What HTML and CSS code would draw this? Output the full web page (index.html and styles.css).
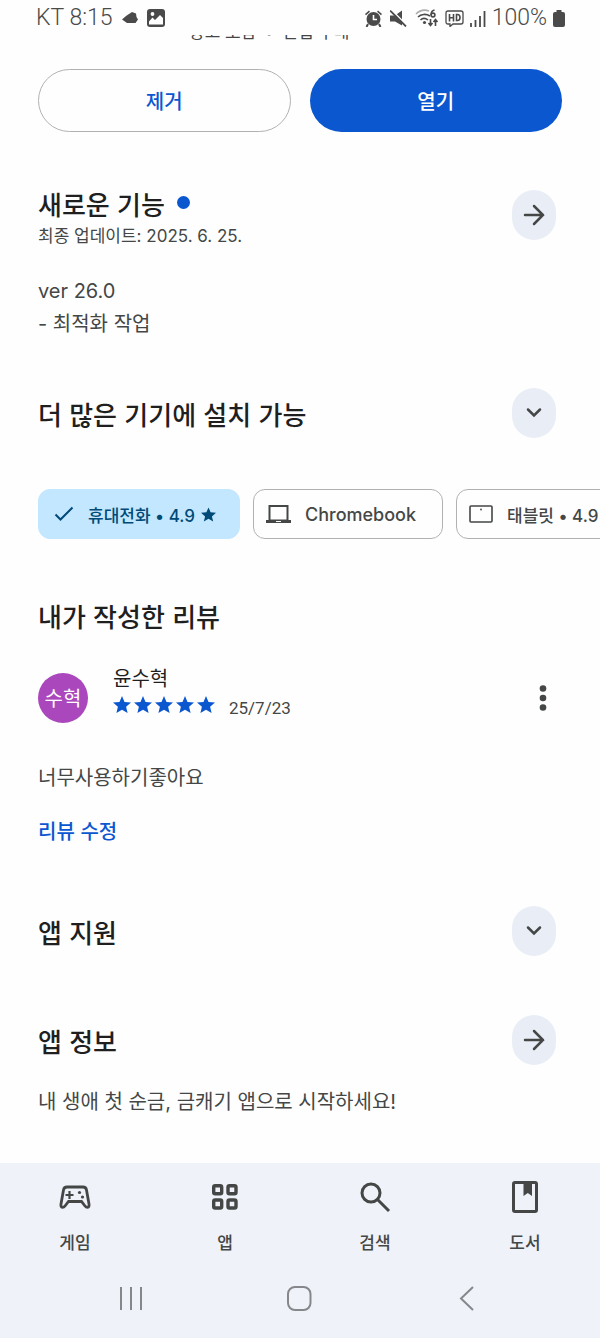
FILE: index.html
```html
<!DOCTYPE html>
<html lang="ko">
<head>
<meta charset="utf-8">
<meta name="viewport" content="width=device-width, initial-scale=1">
<title>앱 상세정보</title>
<link rel="stylesheet" href="styles.css">
</head>
<body>
<svg class="symbols" aria-hidden="true">
  <symbol id="star" viewBox="0 0 18 17"><path d="M9 0l2.500 5.900 6.500.6-4.900 4.300 1.500 6.200L9 13.700 3.400 17l1.500-6.200L0 6.500l6.500-.6z"/></symbol>
  <symbol id="arrow" viewBox="0 0 22 22"><path d="M2 11h18M11 2l9 9-9 9"/></symbol>
  <symbol id="chevron" viewBox="0 0 22 22"><path d="M5 7.500l6 6 6-6"/></symbol>
</svg>

<header class="status">
  <div class="status-side">
    <span>KT 8:15</span>
    <svg class="cloud" viewBox="0 0 16 12"><path d="M0 7.500L4 4 10 0l4 1.500.5 3.500 1.500 2.500-2.500 3.500H5z"/></svg>
    <svg class="photo" viewBox="0 0 18 18"><rect width="18" height="18" rx="3"/><circle cx="5.500" cy="5" r="1.900" fill="#fff"/><path d="M2 12.500l3.500-4 2.500 2.500 5-5 3 3v6.500H2z" fill="#fff"/></svg>
  </div>
  <div class="status-side status-right">
    <svg class="alarm" viewBox="0 0 17 17"><path d="M0 4L4 .5l1 1.300-4 3.500zM17 4L13 .5l-1 1.300 4 3.500z"/><circle cx="8.500" cy="9" r="7"/><path d="M3 14l-1.500 3M14 14l1.500 3" stroke="currentColor" stroke-width="2"/><path d="M8.500 5v4.500H12" fill="none" stroke="#fff" stroke-width="1.600"/></svg>
    <svg class="mute" viewBox="0 0 17 17"><path d="M0 5.500h5L12 .5v15l-7-4H0z"/><path d="M1 -.5l16 16" stroke="#fff" stroke-width="1.600"/><path d="M0 .5l16 16" stroke="currentColor" stroke-width="1.800"/></svg>
    <svg class="wifi" viewBox="0 0 24 18"><g fill="none" stroke="currentColor" stroke-width="1.600"><path d="M1 5C5 1 10 .5 14 2" opacity=".45"/><path d="M3 8c3-3 8-3.500 12-1M5.500 11c2-2 5-2 7.500 0"/><path d="M15.500 10v6.500M13.500 14l2 2.500 2-2.500M20.500 17v-6.500M18.500 13l2-2.500 2 2.500"/><circle cx="18" cy="6" r="1.900"/><path d="M16.100 6c0-3 1-4.500 3.400-5"/></g><circle cx="9.500" cy="13.500" r="1.600"/></svg>
    <svg class="hd" viewBox="0 0 19 17"><g fill="none" stroke="currentColor"><path d="M3 1h13q2 0 2 2v9q0 2-2 2H8l-3 2.500V14H3q-2 0-2-2V3q0-2 2-2z" stroke-width="1.300"/><path d="M4.500 4v7.500M8.500 4v7.500M4.500 7.700h4M11.500 4.500v6h1q2.500 0 2.500-3t-2.500-3z" stroke-width="1.600"/></g></svg>
    <svg class="signal" viewBox="0 0 16 17"><path d="M1 17v-4M5.500 17v-7M10 17V6M14.500 17V1" stroke="currentColor" stroke-width="1.800"/></svg>
    <span>100%</span>
    <svg class="battery" viewBox="0 0 12 17"><path d="M3.500 0h5v2H10q2 0 2 2v11q0 2-2 2H2q-2 0-2-2V4q0-2 2-2h1.500z"/></svg>
  </div>
</header>

<main>
  <div class="clipped"><span>광고 포함</span><span>•</span><span>인앱 구매</span></div>

  <div class="actions">
    <button class="btn btn-outline">제거</button>
    <button class="btn btn-primary">열기</button>
  </div>

  <section class="news">
    <div class="head head-top">
      <div>
        <h2>새로운 기능 <i class="dot"></i></h2>
        <p class="meta">최종 업데이트: 2025. 6. 25.</p>
      </div>
      <button class="round" aria-label="새로운 기능 더보기"><svg><use href="#arrow"/></svg></button>
    </div>
    <p class="text after-meta">ver 26.0<br>- 최적화 작업</p>
  </section>

  <section class="devices">
    <div class="head">
      <h2>더 많은 기기에 설치 가능</h2>
      <button class="round" aria-label="펼치기"><svg><use href="#chevron"/></svg></button>
    </div>
    <div class="chips">
      <button class="chip chip-on">
        <svg class="check" viewBox="0 0 20 20"><path d="M1.500 10.500l5 5L18.500 3.500" fill="none" stroke="currentColor" stroke-width="2"/></svg>
        <span>휴대전화 • 4.9</span><svg class="chip-star"><use href="#star"/></svg>
      </button>
      <button class="chip chip-latin">
        <svg class="laptop" viewBox="0 0 25 20"><path d="M2.500 1h20v15H25v3H0v-3h2.500zM4.500 3v12.500h16V3z" fill-rule="evenodd"/><path d="M10 17.500h5" stroke="#fff"/></svg>
        <span>Chromebook</span>
      </button>
      <button class="chip">
        <svg class="tablet" viewBox="0 0 24 20"><rect x="1" y="2" width="22" height="16" rx="1" fill="none" stroke="currentColor" stroke-width="1.600"/><circle cx="12" cy="5.500" r=".9"/></svg>
        <span>태블릿 • 4.9</span><svg class="chip-star"><use href="#star"/></svg>
      </button>
    </div>
  </section>

  <section class="reviews">
    <h2>내가 작성한 리뷰</h2>
    <div class="review">
      <div class="avatar">수혁</div>
      <div class="author">
        <p class="name">윤수혁</p>
        <div class="rating">
          <span class="stars" role="img" aria-label="별표 5개">
            <svg><use href="#star"/></svg><svg><use href="#star"/></svg><svg><use href="#star"/></svg><svg><use href="#star"/></svg><svg><use href="#star"/></svg>
          </span>
          <time class="date" datetime="2025-07-23">25/7/23</time>
        </div>
      </div>
      <button class="more" aria-label="옵션"><svg viewBox="0 0 8 28"><circle cx="4" cy="4.500" r="3.300"/><circle cx="4" cy="14" r="3.300"/><circle cx="4" cy="23.500" r="3.300"/></svg></button>
    </div>
    <p class="text comment">너무사용하기좋아요</p>
    <a class="edit" href="#">리뷰 수정</a>
  </section>

  <section class="info">
    <div class="head">
      <h2>앱 지원</h2>
      <button class="round" aria-label="펼치기"><svg><use href="#chevron"/></svg></button>
    </div>
  </section>

  <section class="info">
    <div class="head">
      <h2>앱 정보</h2>
      <button class="round" aria-label="앱 정보 더보기"><svg><use href="#arrow"/></svg></button>
    </div>
    <p class="text after-meta">내 생애 첫 순금, 금캐기 앱으로 시작하세요!</p>
  </section>
</main>

<footer>
  <nav class="tabs">
    <a href="#"><svg viewBox="0 0 32 32"><path d="M8 6h16q3 0 3.500 3l2.500 14q.5 3-1.500 3.300-1.500 0-2.500-1.300l-3.500-4.500h-13L6 25q-1 1.300-2.500 1.300-2-.3-1.500-3.300l2.500-14Q5 6 8 6z" fill="none" stroke="currentColor" stroke-width="2.800"/><path d="M10.500 10v8M6.500 14h8" stroke="currentColor" stroke-width="2.200"/><circle cx="20.500" cy="11.500" r="1.600"/><circle cx="23.500" cy="16" r="1.600"/></svg>게임</a>
    <a href="#"><svg viewBox="0 0 32 32"><g fill="none" stroke="currentColor" stroke-width="3.400"><rect x="4.700" y="4.700" width="8" height="8" rx="1.500"/><rect x="19" y="4.700" width="8" height="8" rx="1.500"/><rect x="4.700" y="19" width="8" height="8" rx="1.500"/><rect x="19" y="19" width="8" height="8" rx="1.500"/></g></svg>앱</a>
    <a href="#"><svg viewBox="0 0 32 32"><g fill="none" stroke="currentColor" stroke-width="3"><circle cx="12" cy="12" r="9"/><path d="M18.500 18.500L30 30"/></g></svg>검색</a>
    <a href="#"><svg viewBox="0 0 32 32"><rect x="4.500" y="1.500" width="23" height="29" rx="1.500" fill="none" stroke="currentColor" stroke-width="3"/><path d="M14.500 2H23v13l-4.200-3-4.300 3z"/></svg>도서</a>
  </nav>
  <div class="system">
    <button aria-label="최근 앱"><svg viewBox="0 0 26 26"><path d="M2 2v23M12 2v23M22 2v23"/></svg></button>
    <button aria-label="홈"><svg viewBox="0 0 26 26"><rect x="1" y="2" width="22.500" height="23" rx="7"/></svg></button>
    <button aria-label="뒤로"><svg viewBox="0 0 26 26"><path d="M18 2L6 13.500 18 25"/></svg></button>
  </div>
</footer>
</body>
</html>
```
FILE: styles.css
```css
* { box-sizing: border-box; }

body {
  margin: 0;
  min-height: 100vh;
  display: flex;
  flex-direction: column;
  background: #fefefe;
  color: #444746;
  font-family: "Noto Sans CJK KR", sans-serif;
  overflow-x: hidden;
}

h2, p { margin: 0; }
button { border: 0; padding: 0; background: none; color: inherit; font: inherit; }
a { color: inherit; text-decoration: none; }
svg { display: block; flex: none; fill: currentColor; }
.symbols { position: absolute; width: 0; height: 0; }

.status {
  height: 35px;
  padding: 1px 35px 0 36px;
  display: flex;
  justify-content: space-between;
  align-items: center;
  color: #4a4a4a;
  font: 300 23px/34px Roboto, sans-serif;
}
.status-side { display: flex; align-items: center; gap: 9px; }
.status-right { gap: 6px; }
.cloud { width: 16px; height: 12px; }
.photo { width: 18px; height: 18px; }
.alarm, .mute { width: 17px; height: 17px; }
.mute { margin: 0 2px; }
.wifi { width: 24px; height: 18px; }
.hd { width: 19px; height: 17px; }
.signal { width: 16px; height: 17px; }
.battery { width: 12px; height: 17px; }

main { flex: 1; padding: 0 38px 44px; }

.clipped {
  height: 6px;
  overflow: hidden;
  display: flex;
  align-items: flex-end;
  gap: 10px;
  padding-left: 151px;
  font-size: 17px;
  line-height: 20px;
}

.actions { display: grid; grid-template-columns: 1fr 1fr; gap: 19px; margin-top: 28px; }
.btn { height: 63px; border-radius: 32px; font-size: 20px; font-weight: 500; }
.btn-outline { border: 1px solid #b0b2b1; color: #0b57d0; }
.btn-primary { background: #0b57d0; color: #fff; }

.news { margin-top: 58px; }
.head { display: flex; justify-content: space-between; align-items: center; padding-right: 6px; }
h2 { color: #1f1f1f; font-size: 26px; font-weight: 500; line-height: 30px; }
.head h2 { padding-top: 1px; }
.head-top { align-items: flex-start; }
.head-top h2 { padding-top: 0; line-height: 28px; }
.dot { display: inline-block; width: 13px; height: 13px; margin-left: 5px; border-radius: 50%; background: #0b57d0; vertical-align: 6px; }
.meta { font-family: Inter, "Noto Sans CJK KR", sans-serif; font-size: 17px; line-height: 36px; }
.round {
  width: 44px;
  height: 50px;
  border-radius: 22px;
  background: #e9eef6;
  display: grid;
  place-items: center;
}
.round svg { width: 22px; height: 22px; fill: none; stroke: currentColor; stroke-width: 2.5; stroke-linecap: round; }
.text { font-family: Inter, "Noto Sans CJK KR", sans-serif; font-size: 20px; line-height: 33px; }
.after-meta { margin-top: 21px; }

.devices { margin-top: 47px; }
.chips { display: flex; gap: 13px; margin: 51px -38px 0 0; overflow: hidden; }
.chip {
  flex: none;
  height: 50px;
  padding: 0 26px 0 12px;
  border: 1px solid #b0b2b1;
  border-radius: 12px;
  display: flex;
  align-items: center;
  font-family: Inter, "Noto Sans CJK KR", sans-serif;
  font-size: 17px;
  font-weight: 500;
}
.chip span { margin-left: 14px; }
.chip-latin { font-size: 18px; }
.chip-on { padding: 0 23px 0 15px; border-color: #c2e7ff; background: #c2e7ff; color: #004a77; }
.check { width: 20px; height: 20px; }
.laptop { width: 25px; height: 20px; }
.tablet { width: 24px; height: 20px; }
.chip-star { width: 15px; height: 15px; margin-left: 6px; }
.chip-star use { width: 15px; height: 15px; }

.reviews { margin-top: 62px; }
.review { display: flex; align-items: flex-end; height: 59px; margin-top: 33px; }
.avatar {
  width: 50px;
  height: 50px;
  border-radius: 50%;
  background: #ab47bc;
  color: #fff;
  font-size: 20px;
  line-height: 50px;
  text-align: center;
}
.author { flex: 1; align-self: flex-start; margin-left: 25px; }
.name { color: #1f1f1f; font-size: 20px; line-height: 28px; }
.rating { display: flex; align-items: flex-start; gap: 14px; height: 26px; padding-top: 4px; }
.stars { display: flex; gap: 3px; color: #0b57d0; }
.stars svg { width: 18px; height: 17px; }
.date { font-family: Roboto, sans-serif; font-size: 17px; line-height: 24px; }
.more { width: 38px; height: 50px; display: grid; place-items: center; }
.more svg { width: 8px; height: 28px; }
.comment { margin-top: 39px; }
.edit { display: block; margin-top: 20px; color: #0b57d0; font-size: 20px; font-weight: 500; line-height: 32px; }

.info { margin-top: 59px; }

footer { background: #eff2f8; }
.tabs { display: flex; padding-top: 18px; }
.tabs a {
  flex: 1;
  display: flex;
  flex-direction: column;
  align-items: center;
  gap: 16px;
  font-size: 17px;
  font-weight: 500;
  line-height: 26px;
}
.tabs svg { width: 32px; height: 32px; }
.system { display: flex; justify-content: center; gap: 142px; height: 80px; margin-top: 3px; color: #85878b; }
.system svg { width: 26px; height: 26px; fill: none; stroke: currentColor; stroke-width: 2; }
```
